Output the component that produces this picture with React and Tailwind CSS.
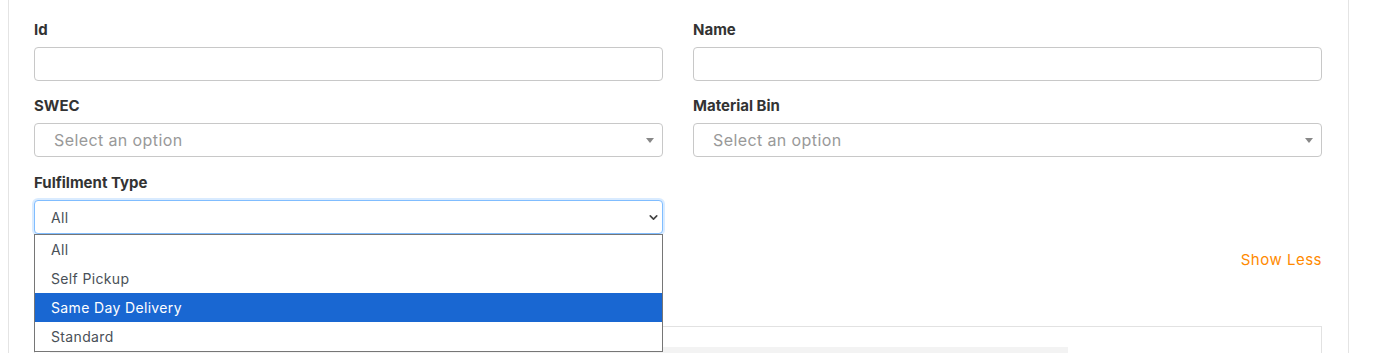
import { ChevronDown } from 'lucide-react';

const font = { fontFamily: 'Inter, "Noto Sans", sans-serif' };

function Label({ children }) {
  return <div className="mb-[6px] text-[15px] font-bold leading-[22px] text-[#333]">{children}</div>;
}

function TextField({ label }) {
  return (
    <div>
      <Label>{label}</Label>
      <div className="h-[34px] rounded-[4px] border border-[#c8c8c8] bg-white" />
    </div>
  );
}

function Select2({ label }) {
  return (
    <div>
      <Label>{label}</Label>
      <div className="flex h-[34px] items-center justify-between rounded-[4px] border border-[#c8c8c8] bg-white pl-[19px] pr-[8px]">
        <span className="text-[16px] tracking-[0.4px] text-[#999]">Select an option</span>
        <span className="h-0 w-0 border-x-[4px] border-t-[5px] border-x-transparent border-t-[#888]" />
      </div>
    </div>
  );
}

const options = ['All', 'Self Pickup', 'Same Day Delivery', 'Standard'];

export default function App() {
  return (
    <div className="h-[353px] overflow-hidden bg-white" style={font}>
      <div className="ml-[8px] mr-[24px] h-full border-x border-[#e4e4e4] pl-[25px] pr-[26px] pt-[19px]">
        <div className="grid grid-cols-2 gap-x-[30px] gap-y-[14px]">
          <TextField label="Id" />
          <TextField label="Name" />
          <Select2 label="SWEC" />
          <Select2 label="Material Bin" />
          <div className="relative pt-[1px]">
            <Label>Fulfilment Type</Label>
            <div className="flex h-[34px] items-center justify-between rounded-[4px] border border-[#80bdff] bg-white pl-[16px] pr-[2px] shadow-[0_0_0_2px_rgba(0,123,255,0.15)]">
              <span className="text-[14px] tracking-[0.3px] text-[#495057]">All</span>
              <ChevronDown size={13} strokeWidth={3} className="text-[#444]" />
            </div>
            <ul className="absolute left-0 right-0 top-[63px] z-10 border border-[#767676] bg-white text-[14px] tracking-[0.35px] text-[#495057]">
              {options.map(o => (
                <li
                  key={o}
                  className={
                    'flex h-[29px] items-center pl-[16px] ' +
                    (o === 'Same Day Delivery' ? 'bg-[#1967d2] text-white' : '')
                  }
                >
                  {o}
                </li>
              ))}
            </ul>
          </div>
        </div>
        <div className="mt-[15px] flex justify-end">
          <button className="text-[15px] leading-[22px] tracking-[0.5px] text-[#ff8a00]">Show Less</button>
        </div>
        <div className="mt-[55px] h-[60px] border border-[#e2e2e2] pl-[15px] pr-[253px] pt-[20px]">
          <div className="h-[20px] bg-[#f3f3f3]" />
        </div>
      </div>
    </div>
  );
}
